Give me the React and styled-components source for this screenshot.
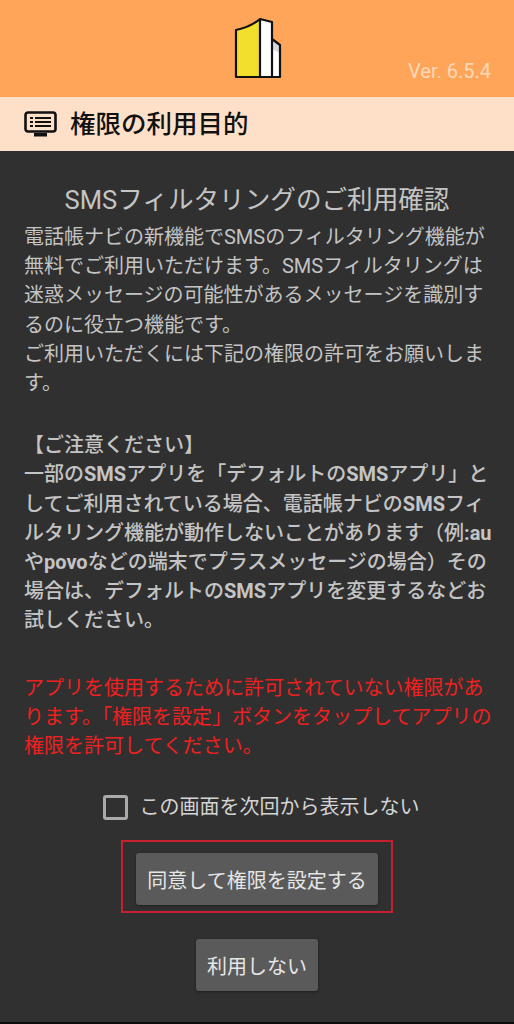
import React from 'react';
import styled, { createGlobalStyle } from 'styled-components';

const FONT = '"Roboto", "Noto Sans CJK JP", sans-serif';

const Global = createGlobalStyle`
  html, body { margin: 0; padding: 0; background: #303030; }
  body { font-family: ${FONT}; }
`;

const Page = styled.div`
  width: 514px;
  height: 1024px;
  display: flex;
  flex-direction: column;
  overflow: hidden;
  background: #303030;
  border-bottom: 2px solid #0c0c0c;
  box-sizing: border-box;
`;

const Header = styled.header`
  height: 97px;
  flex: none;
  display: flex;
  align-items: flex-start;
  justify-content: center;
  position: relative;
  background: #ffa55a;
  padding-top: 17px;
  box-sizing: border-box;
`;

const Version = styled.span`
  position: absolute;
  right: 23px;
  top: 59px;
  font-size: 20px;
  line-height: 24px;
  color: #fdd9b8;
`;

const TitleBar = styled.div`
  height: 54px;
  flex: none;
  display: flex;
  align-items: center;
  gap: 13px;
  padding-left: 24px;
  background: #fee0c8;
  color: #111;
`;

const TitleText = styled.h1`
  margin: 0;
  font-size: 25.5px;
  font-weight: 500;
  line-height: 30px;
`;

const Content = styled.main`
  flex: 1;
  display: flex;
  flex-direction: column;
  align-items: center;
  padding: 31px 24px 0;
`;

const Heading = styled.h2`
  margin: 0 0 5px;
  font-size: 25.6px;
  font-weight: 400;
  line-height: 36px;
  color: #c4c4c4;
  text-align: center;
  white-space: nowrap;
`;

const Body = styled.p`
  margin: 0;
  align-self: stretch;
  font-size: 20px;
  line-height: 29.2px;
  white-space: nowrap;
  font-weight: ${(p) => (p.$strong ? 500 : 400)};
  color: ${(p) => (p.$tone === 'red' ? '#ef2020' : '#c4c4c4')};
  margin-top: ${(p) => p.$top || 0}px;
`;

const Latin = styled.b`
  font-weight: 700;
`;

const CheckRow = styled.label`
  display: flex;
  align-items: center;
  gap: 12px;
  margin: 32px 0 0 8px;
  font-size: 20px;
  line-height: 28px;
  color: #d4d4d4;
`;

const CheckBox = styled.span`
  width: 25px;
  height: 25px;
  box-sizing: border-box;
  border: 3px solid #aaa;
  border-radius: 3px;
`;

const Highlight = styled.div`
  margin-top: 19px;
  padding: 11px 13px 6px;
  border: 2.5px solid #c8202e;
`;

const Button = styled.button`
  display: block;
  height: 52px;
  padding: 0 11px;
  border: 0;
  border-radius: 3px;
  background: #5a5a5a;
  color: #e6e6e6;
  font-family: ${FONT};
  font-size: 20px;
  box-shadow: 0 1px 3px rgba(0, 0, 0, .4);
`;

const SecondButton = styled(Button)`
  margin-top: 26px;
`;

const LogoSvg = styled.svg`
  margin-left: 1px;
`;

const BuildingLogo = () => (
  <LogoSvg width="48" height="62" viewBox="0 0 48 62">
    <path d="M38 22 L46 28 V60 H38 Z" fill="#fff" />
    <path d="M38 22 L46 28 V36 L38 32 Z" fill="#d4dade" />
    <path d="M26 2 L38 5 V60 H26 Z" fill="#fff" />
    <path d="M2 13 C11 11 19 8 26 2 V60 H2 Z" fill="#f2df2d" />
    <path d="M2 13 C11 11 19 8 26 2 L38 5 V22 L46 28 V60 H2 Z M26 2 V60 M38 5 V60" fill="none" stroke="#111" strokeWidth="2.2" strokeLinejoin="round" />
  </LogoSvg>
);

const MonitorIcon = () => (
  <svg width="33" height="27" viewBox="0 0 33 27">
    <rect x="1.5" y="1.5" width="30" height="19" rx="2.5" fill="none" stroke="#111" strokeWidth="2.6" />
    <path d="M10 22 H23 V25.5 H10 Z" fill="#111" />
    <path d="M6 7 H9 M11 7 H27 M6 11 H9 M11 11 H27 M6 15 H9 M11 15 H27" stroke="#111" strokeWidth="2" />
  </svg>
);

export default function App() {
  return (
    <Page>
      <Global />
      <Header>
        <BuildingLogo />
        <Version>Ver. 6.5.4</Version>
      </Header>
      <TitleBar>
        <MonitorIcon />
        <TitleText>権限の利用目的</TitleText>
      </TitleBar>
      <Content>
        <Heading>SMSフィルタリングのご利用確認</Heading>
        <Body>
          電話帳ナビの新機能でSMSのフィルタリング機能が<br />
          無料でご利用いただけます。SMSフィルタリングは<br />
          迷惑メッセージの可能性があるメッセージを識別す<br />
          るのに役立つ機能です。<br />
          ご利用いただくには下記の権限の許可をお願いしま<br />
          す。
        </Body>
        <Body $strong $top={33}>
          【ご注意ください】<br />
          一部の<Latin>SMS</Latin>アプリを「デフォルトの<Latin>SMS</Latin>アプリ」と<br />
          してご利用されている場合、電話帳ナビの<Latin>SMS</Latin>フィ<br />
          ルタリング機能が動作しないことがあります（例<Latin>:au</Latin><br />
          や<Latin>povo</Latin>などの端末でプラスメッセージの場合）その<br />
          場合は、デフォルトの<Latin>SMS</Latin>アプリを変更するなどお<br />
          試しください。
        </Body>
        <Body $tone="red" $top={38}>
          アプリを使用するために許可されていない権限があ<br />
          ります。「権限を設定」ボタンをタップしてアプリの<br />
          権限を許可してください。
        </Body>
        <CheckRow>
          <CheckBox />
          この画面を次回から表示しない
        </CheckRow>
        <Highlight>
          <Button>同意して権限を設定する</Button>
        </Highlight>
        <SecondButton>利用しない</SecondButton>
      </Content>
    </Page>
  );
}
